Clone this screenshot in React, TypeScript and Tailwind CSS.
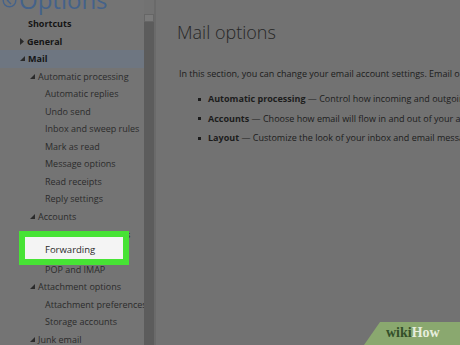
import React from "react";

const font = { fontFamily: '"Open Sans", "Noto Sans", sans-serif' };

function Expanded() {
  return (
    <svg width="5" height="5" viewBox="0 0 5 5" className="shrink-0">
      <polygon points="5,0 5,5 0,5" fill="#2a2a2a" />
    </svg>
  );
}
function Collapsed() {
  return (
    <svg width="4" height="7" viewBox="0 0 4 7" className="shrink-0">
      <polygon points="0,0 4,3.5 0,7" fill="#2a2a2a" />
    </svg>
  );
}

type Item = { label: string; level: 0 | 1 | 2; icon?: "e" | "c"; bold?: boolean; sel?: boolean };

const items: Item[] = [
  { label: "Shortcuts", level: 0, bold: true },
  { label: "General", level: 0, icon: "c", bold: true },
  { label: "Mail", level: 0, icon: "e", bold: true, sel: true },
  { label: "Automatic processing", level: 1, icon: "e" },
  { label: "Automatic replies", level: 2 },
  { label: "Undo send", level: 2 },
  { label: "Inbox and sweep rules", level: 2 },
  { label: "Mark as read", level: 2 },
  { label: "Message options", level: 2 },
  { label: "Read receipts", level: 2 },
  { label: "Reply settings", level: 2 },
  { label: "Accounts", level: 1, icon: "e" },
  { label: "Connected accounts", level: 2 },
  { label: "Forwarding", level: 2 },
  { label: "POP and IMAP", level: 2 },
  { label: "Attachment options", level: 1, icon: "e" },
  { label: "Attachment preferences", level: 2 },
  { label: "Storage accounts", level: 2 },
  { label: "Junk email", level: 1, icon: "e" },
];

function Row({ it }: { it: Item }) {
  const pad = it.level === 0 ? "pl-[20px]" : it.level === 1 ? "pl-[30px]" : "pl-[45px]";
  return (
    <div
      className={`h-[17.55px] shrink-0 flex items-center gap-[3px] whitespace-nowrap ${pad} ${
        it.sel ? "bg-[#6e7681]" : ""
      }`}
    >
      {it.icon === "e" ? <Expanded /> : it.icon === "c" ? <Collapsed /> : it.level === 0 ? <span className="w-[5px] shrink-0" /> : null}
      <span
        className={`text-[9px] ${it.bold ? "font-bold text-[#151515]" : "text-[#2b2b2b]"}`}
      >
        {it.label}
      </span>
    </div>
  );
}

function Bullet({ label, text }: { label: string; text: string }) {
  return (
    <li className="flex items-center h-[12px]">
      <span className="w-[3px] h-[3px] shrink-0 bg-[#1c1c1c] ml-[21px] mr-[7px]" />
      <b className="shrink-0">{label}</b>
      <span className="shrink-0">&nbsp;— {text}</span>
    </li>
  );
}

export default function App() {
  return (
    <div className="w-[460px] h-[345px] overflow-hidden flex bg-[#727272] relative" style={font}>
      {/* Sidebar */}
      <div className="w-[144px] shrink-0 flex flex-col bg-[#747474] relative overflow-hidden">
        <div className="h-[15px] shrink-0 relative overflow-visible">
          <div className="absolute left-[2px] top-[-12px] flex items-center gap-[2px] text-[#44628a]">
            <svg width="15" height="15" viewBox="0 0 15 15">
              <circle cx="7.5" cy="7.5" r="6.3" fill="none" stroke="#44628a" strokeWidth="1.4" />
              <path d="M9 4 L5.5 7.5 L9 11" fill="none" stroke="#44628a" strokeWidth="1.4" />
            </svg>
            <span className="text-[24px] leading-none">Options</span>
          </div>
        </div>
        {items.map((it) => (
          <Row key={it.label} it={it} />
        ))}
      </div>
      {/* Scrollbar */}
      <div className="w-[10px] shrink-0 flex flex-col bg-[#5c5c5c]">
        <div className="h-[14px] bg-[#727272]" />
        <div className="h-[8px] bg-[#7a7a7a] border border-[#666]" />
        <div className="flex-1" />
      </div>
      <div className="w-[2px] shrink-0 bg-[#6a6a6a]" />
      {/* Main */}
      <div className="flex-1 pl-[21px] pt-[23px] whitespace-nowrap overflow-hidden text-[#1c1c1c]">
        <div className="text-[18px] font-light text-[#262626] leading-none">Mail options</div>
        <div className="mt-[27px] text-[9px] pl-[2px] h-[12px] flex items-center">
          In this section, you can change your email account settings. Email options let you
        </div>
        <ul className="mt-[13px] flex flex-col gap-[7.5px] text-[9px]">
          <Bullet label="Automatic processing" text="Control how incoming and outgoing messages are handled." />
          <Bullet label="Accounts" text="Choose how email will flow in and out of your account." />
          <Bullet label="Layout" text="Customize the look of your inbox and email messages." />
        </ul>
      </div>

      {/* Highlight annotation */}
      <div className="absolute left-[19px] top-[231px] w-[110px] h-[34px] bg-[#47e335] p-[6px]">
        <div className="w-full h-full bg-[#f4f4f4] flex items-center pl-[20px] pt-[5px] text-[9.5px] text-[#2b2b2b]">
          Forwarding
        </div>
      </div>

      {/* wikiHow watermark */}
      <div className="absolute right-0 bottom-0 w-[96px] h-[23px]">
        <svg width="96" height="23" viewBox="0 0 96 23" className="absolute inset-0">
          <polygon points="16,0 96,0 96,23 0,23" fill="#8aa86f" />
        </svg>
        <div
          className="absolute left-[22px] top-[2px] text-[14px] font-bold leading-[18px]"
          style={{ fontFamily: '"Liberation Serif", serif' }}
        >
          <span className="text-[#34502a]">wiki</span>
          <span className="text-[#e6eedd]">How</span>
        </div>
      </div>
    </div>
  );
}
